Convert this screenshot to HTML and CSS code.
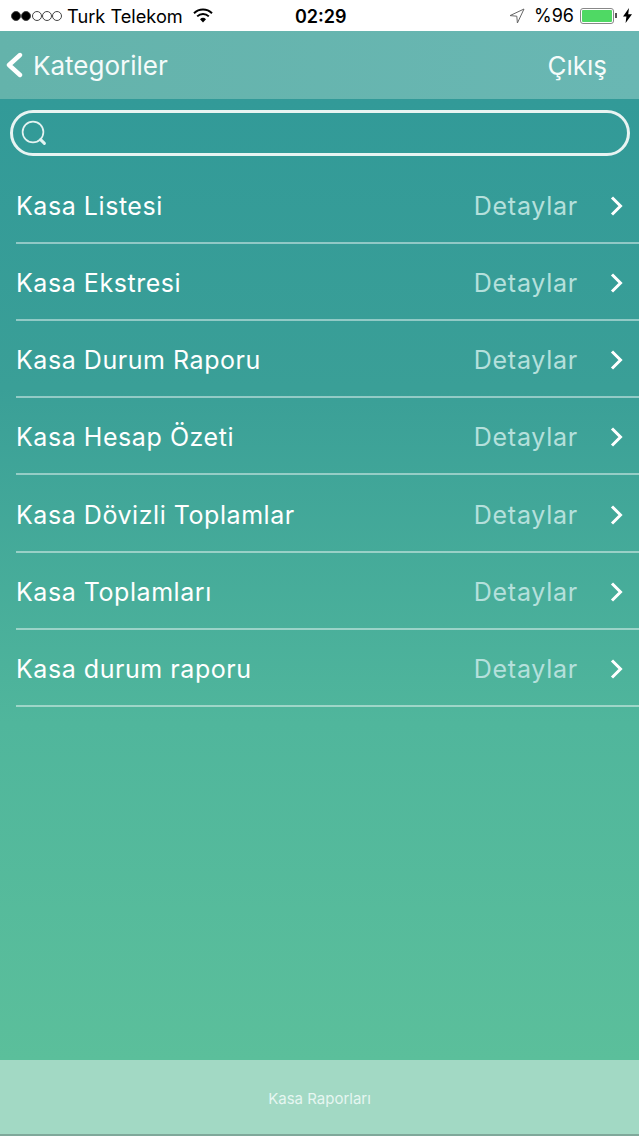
FILE: index.html
```html
<!DOCTYPE html>
<html lang="en">
<head>
    <meta charset="UTF-8">
    <meta name="viewport" content="width=device-width, initial-scale=1.0">
    <title>Kasa Raporları</title>
    <link rel="stylesheet" href="styles.css">
</head>
<body>
    <div class="status-bar">
        <div class="status-left">
            <span class="signal">
                <i class="dot on"></i><i class="dot on"></i><i class="dot"></i><i class="dot"></i><i class="dot"></i>
            </span>
            <span class="carrier">Turk Telekom</span>
            <svg class="wifi" width="20" height="15" viewBox="0 0 20 15">
                <path d="M1 5.2a13 13 0 0 1 18 0" fill="none" stroke="#000" stroke-width="2"/>
                <path d="M4.2 8.4a8.4 8.4 0 0 1 11.6 0" fill="none" stroke="#000" stroke-width="2"/>
                <path d="M7 11.2a4.4 4.4 0 0 1 6 0L10 14.4z" fill="#000"/>
            </svg>
        </div>
        <div class="status-time">02:29</div>
        <div class="status-right">
            <svg class="location" width="16" height="16" viewBox="0 0 16 16">
                <path d="M15 1 1 7.6l6.8.6.6 6.8z" fill="none" stroke="#666" stroke-width="1"/>
            </svg>
            <span class="percent">%96</span>
            <span class="battery"><span class="battery-fill"></span></span>
            <span class="battery-cap"></span>
            <svg class="bolt" width="9" height="15" viewBox="0 0 9 15">
                <path d="M6 0 0 8.4h3.4L2.6 15 9 6.2H5.2z" fill="#000"/>
            </svg>
        </div>
    </div>

    <div class="nav-bar">
        <div class="nav-back">
            <svg width="18" height="26" viewBox="0 0 18 26">
                <path d="M15 3 4 13l11 10" fill="none" stroke="#fff" stroke-width="4.4" stroke-linecap="round" stroke-linejoin="round"/>
            </svg>
            <span>Kategoriler</span>
        </div>
        <div class="nav-exit">Çıkış</div>
    </div>

    <div class="content">
        <div class="search-box">
            <svg width="28" height="28" viewBox="0 0 28 28">
                <circle cx="13" cy="13" r="10.4" fill="none" stroke="#e4f3f1" stroke-width="1.7"/>
                <path d="M20.6 20.6 24.4 24.4" stroke="#e4f3f1" stroke-width="3" stroke-linecap="round"/>
            </svg>
        </div>

        <ul class="report-list">
            <li class="report-row"><span class="report-name">Kasa Listesi</span><span class="report-link">Detaylar</span><svg class="chevron" width="14" height="22" viewBox="0 0 14 22"><path d="M2 2.500 10.500 11 2 19.500" fill="none" stroke="#fff" stroke-width="3"/></svg></li>
            <li class="report-row"><span class="report-name">Kasa Ekstresi</span><span class="report-link">Detaylar</span><svg class="chevron" width="14" height="22" viewBox="0 0 14 22"><path d="M2 2.500 10.500 11 2 19.500" fill="none" stroke="#fff" stroke-width="3"/></svg></li>
            <li class="report-row"><span class="report-name">Kasa Durum Raporu</span><span class="report-link">Detaylar</span><svg class="chevron" width="14" height="22" viewBox="0 0 14 22"><path d="M2 2.500 10.500 11 2 19.500" fill="none" stroke="#fff" stroke-width="3"/></svg></li>
            <li class="report-row"><span class="report-name">Kasa Hesap Özeti</span><span class="report-link">Detaylar</span><svg class="chevron" width="14" height="22" viewBox="0 0 14 22"><path d="M2 2.500 10.500 11 2 19.500" fill="none" stroke="#fff" stroke-width="3"/></svg></li>
            <li class="report-row"><span class="report-name">Kasa Dövizli Toplamlar</span><span class="report-link">Detaylar</span><svg class="chevron" width="14" height="22" viewBox="0 0 14 22"><path d="M2 2.500 10.500 11 2 19.500" fill="none" stroke="#fff" stroke-width="3"/></svg></li>
            <li class="report-row"><span class="report-name">Kasa Toplamları</span><span class="report-link">Detaylar</span><svg class="chevron" width="14" height="22" viewBox="0 0 14 22"><path d="M2 2.500 10.500 11 2 19.500" fill="none" stroke="#fff" stroke-width="3"/></svg></li>
            <li class="report-row"><span class="report-name">Kasa durum raporu</span><span class="report-link">Detaylar</span><svg class="chevron" width="14" height="22" viewBox="0 0 14 22"><path d="M2 2.500 10.500 11 2 19.500" fill="none" stroke="#fff" stroke-width="3"/></svg></li>
        </ul>
    </div>

    <div class="footer-bar">Kasa Raporları</div>
</body>
</html>
```

FILE: styles.css
```css
html, body {
    margin: 0;
    padding: 0;
}
body {
    width: 639px;
    height: 1136px;
    overflow: hidden;
    display: flex;
    flex-direction: column;
    font-family: Inter, "Liberation Sans", sans-serif;
    background-color: #5bbf9b;
}
.status-bar {
    height: 31px;
    flex: none;
    background-color: #fff;
    display: flex;
    align-items: center;
    justify-content: space-between;
    padding: 0 7px 0 11px;
    position: relative;
    color: #000;
}
.status-left, .status-right {
    display: flex;
    align-items: center;
}
.signal {
    display: flex;
    gap: 0.25px;
}
.dot {
    width: 10px;
    height: 10px;
    box-sizing: border-box;
    border: 1px solid #444;
    border-radius: 50%;
}
.dot.on {
    background-color: #000;
}
.carrier {
    font-size: 18.2px;
    margin-left: 5px;
}
.wifi {
    margin-left: 10px;
}
.status-time {
    position: absolute;
    left: 295px;
    top: 6px;
    font-size: 18px;
    line-height: 21px;
    font-weight: 600;
}
.location {
    margin-right: 9px;
}
.percent {
    font-size: 18px;
    margin-right: 6px;
}
.battery {
    width: 34px;
    height: 16px;
    box-sizing: border-box;
    border: 1px solid #888;
    border-radius: 3px;
    padding: 1px;
    display: flex;
}
.battery-fill {
    flex: 1;
    background-color: #4fd964;
    border-radius: 1px;
}
.battery-cap {
    width: 2px;
    height: 5px;
    background-color: #555;
    margin-left: 1px;
}
.bolt {
    margin-left: 6px;
}
.nav-bar {
    height: 68px;
    flex: none;
    background: linear-gradient(90deg, #64b3ab 0%, #69b7b3 100%);
    display: flex;
    align-items: center;
    justify-content: space-between;
    padding: 0 32px 0 5px;
    color: #fff;
    font-size: 26px;
}
.nav-back {
    display: flex;
    align-items: center;
    gap: 10px;
}
.nav-back span {
    color: #f5fbfa;
}
.nav-exit {
    color: #f5fbfa;
}
.content {
    flex: 1;
    padding-top: 11px;
    background: linear-gradient(180deg, #329a98 0%, #3a9f97 30%, #50b69c 65%, #5bbf9b 100%);
}
.search-box {
    height: 46px;
    box-sizing: border-box;
    margin: 0 9px 10.900px 10px;
    border: 3px solid #e8f4f2;
    border-radius: 23px;
    display: flex;
    align-items: center;
    padding-left: 7px;
}
.report-list {
    list-style: none;
    margin: 0;
    padding: 0 0 0 16px;
}
.report-row {
    height: 77.150px;
    box-sizing: border-box;
    border-bottom: 2px solid rgba(255, 255, 255, 0.45);
    display: flex;
    align-items: center;
    padding: 3px 15px 0 0;
}
.report-name {
    flex: 1;
    color: #fff;
    font-size: 25px;
    letter-spacing: 0.55px;
}
.report-link {
    color: #b5e0dc;
    font-size: 25px;
    letter-spacing: 0.75px;
    margin-right: 32px;
}
.footer-bar {
    height: 76px;
    flex: none;
    box-sizing: border-box;
    border-bottom: 2px solid #7fa89a;
    background-color: #a2d9c4;
    display: flex;
    align-items: center;
    justify-content: center;
    padding-top: 2px;
    color: #e6f6f1;
    font-size: 15px;
}
```
